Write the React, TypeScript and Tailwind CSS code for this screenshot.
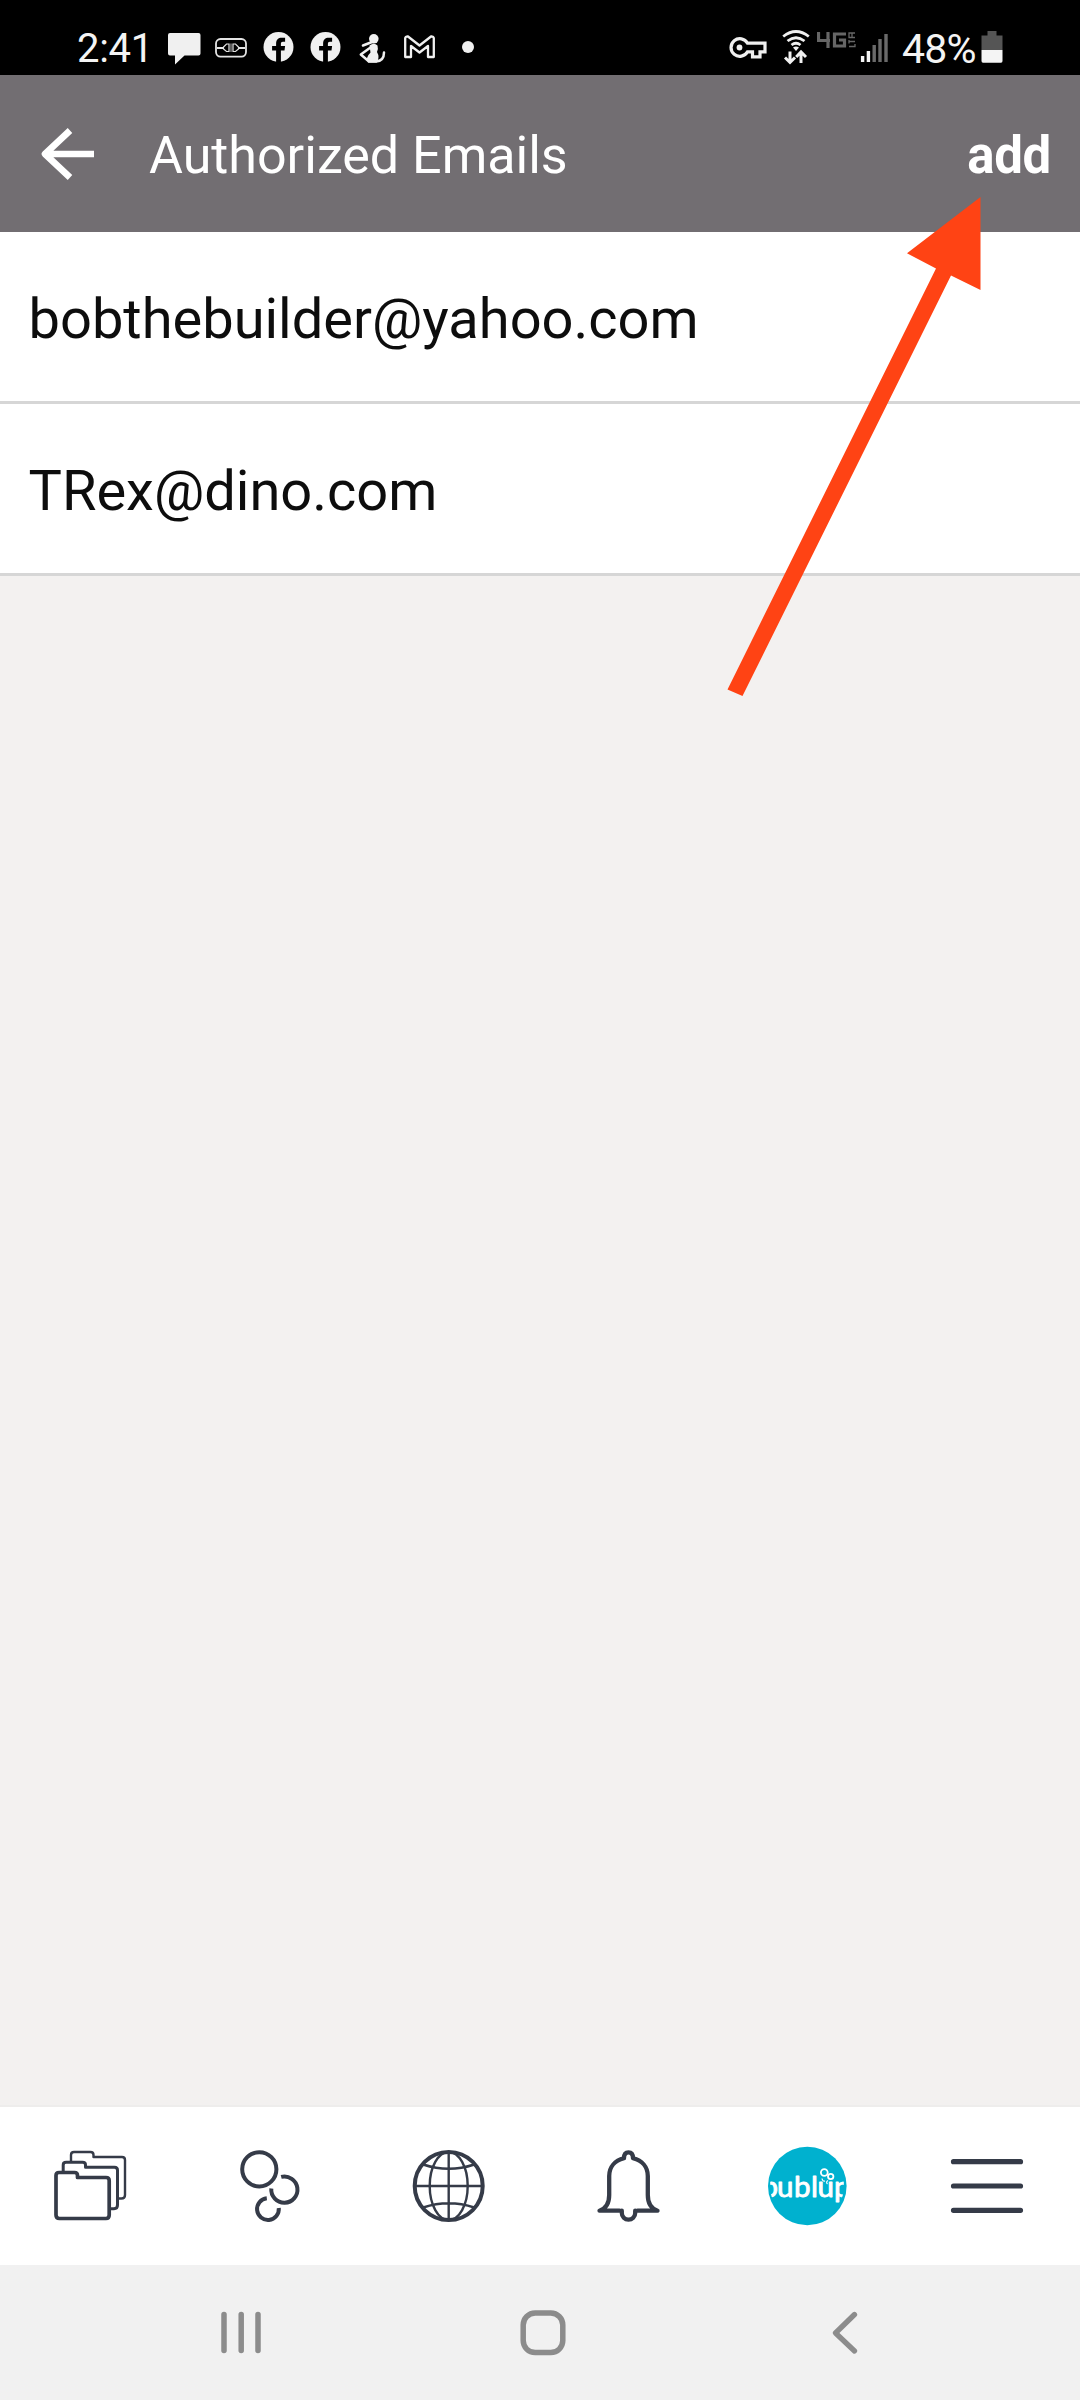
import React from 'react';

const emails = ['bobthebuilder@yahoo.com', 'TRex@dino.com'];

const FacebookDot = ({ className }: { className: string }) => (
  <svg className={className} viewBox="0 0 30 30">
    <circle cx="15" cy="15" r="15" fill="#f0f0f0" />
    <path d="M12.6 30V18.6H8.6V14H12.6V11.6C12.6 7.6 14.8 5.8 18.2 5.8H21.6V9.8H19.4C18 9.8 17.4 10.6 17.4 11.8V14H21.6L21 18.6H17.4V30Z" fill="#000" />
  </svg>
);

const StatusBar = () => (
  <div className="flex h-[75px] shrink-0 items-start bg-black text-[#f4f4f4]">
    <span className="ml-[77px] mt-[25px] w-[91px] whitespace-nowrap text-[40px] leading-[48px] tracking-[-0.3px]">2:41</span>
    <svg className="mt-[33px] h-[32px] w-[33px]" viewBox="0 0 33 32">
      <path d="M2 0H30.500Q32.500 0 32.500 2V20.500Q32.500 22.500 30.500 22.500H16.500L7 31.500V22.500H2Q0 22.500 0 20.500V2Q0 0 2 0Z" fill="#f0f0f0" />
    </svg>
    <svg className="ml-[14px] mt-[38px] h-[20px] w-[32px]" viewBox="0 0 32 20" fill="none" stroke="#e4e4e4" strokeWidth="1.800">
      <rect x="1" y="1" width="30" height="17.600" rx="4.500" />
      <path d="M2 10H8.500M23.500 10H30" strokeWidth="2" />
      <path d="M14 6H11.500L8.500 9V11L11.500 13.500H14ZM18 6H20.500L23.500 9V11L20.500 13.500H18Z" strokeWidth="1.200" />
      <path d="M16 5.500V14" strokeWidth="0.800" />
    </svg>
    <FacebookDot className="ml-[16px] mt-[32px] h-[30px] w-[31px]" />
    <FacebookDot className="ml-[16px] mt-[32px] h-[30px] w-[31px]" />
    <svg className="ml-[18px] mt-[33px] h-[31px] w-[27px]" viewBox="0 0 27 31">
      <circle cx="14.800" cy="5.800" r="4.800" fill="#f0f0f0" />
      <path d="M13 9L4 12.500" stroke="#f0f0f0" strokeWidth="2.600" strokeLinecap="round" />
      <path d="M10.500 12.500Q15 9 18.500 12.500Q19.500 16 18 19Q21 24 18 29.500H9Q6 25 11.500 19.500Z" fill="#f0f0f0" />
      <path d="M11.500 14.500L1.800 21.500L10 28.500H17Q25 28 25 19.500" fill="none" stroke="#f0f0f0" strokeWidth="2.500" strokeLinecap="round" strokeLinejoin="round" />
    </svg>
    <svg className="ml-[18px] mt-[35px] h-[24px] w-[31px]" viewBox="0 0 31 24" fill="none" stroke="#f0f0f0" strokeWidth="2.300" strokeLinejoin="round">
      <path d="M1.200 22V3Q1.500 1.200 4 1.500L15.500 10.500L27 1.500Q29.500 1.200 29.800 3V22H24V11L15.500 17.500L7 11V22Z" />
    </svg>
    <div className="ml-[27px] mt-[41px] h-3 w-3 rounded-full bg-[#f0f0f0]" />
    <svg className="ml-[255px] mt-[37px] h-[22px] w-[38px]" viewBox="0 0 38 22" fill="none" stroke="#f0f0f0" strokeWidth="3.200">
      <path d="M18.500 6.200A8.800 8.800 0 1 0 18.500 14.800H23.500V19.800H31V14.800H36V6.200Z" />
      <circle cx="10.500" cy="10.500" r="2.900" fill="#f0f0f0" stroke="none" />
    </svg>
    <svg className="ml-[15px] mt-[30px] h-[35px] w-[28px]" viewBox="0 0 28 35" fill="none" stroke="#f0f0f0" strokeWidth="2.800">
      <path d="M1.200 6.500Q14 -3.500 26.800 6.500M5.500 11Q14 4.500 22.500 11M9.500 15Q14 11.500 18.500 15" />
      <path d="M11 17.500Q14 15.500 17 17.500L14 21Z" fill="#f0f0f0" stroke="none" />
      <path d="M8 21.500V32M3 27.500L8 32.500L13 27.500M19 33V22M14.200 27L19 22L24 27" strokeWidth="3" />
    </svg>
    <svg className="ml-[7px] mt-[32px] h-[17px] w-[39px]" viewBox="0 0 39 17" fill="none" stroke="#666" strokeWidth="3.200">
      <path d="M1.500 0V8.500H13M11 0V16M29 2H17.500V14H27.500V8H22" />
      <path d="M38 1H32V5.500H38M35 1V5.500M32 8V11.500M32 9.500H38M32 14.500H38V12" strokeWidth="1.300" />
    </svg>
    <svg className="ml-[4px] mt-[33px] h-[30px] w-[28px]" viewBox="0 0 28 30" strokeWidth="3.400">
      <path d="M2.600 23V29M8.400 18V29" stroke="#f4f4f4" />
      <path d="M14.200 12V29M20 6V29M26 1V29" stroke="#6a6a6a" />
    </svg>
    <span className="ml-[14px] mt-[25px] w-[79px] whitespace-nowrap text-[41px] leading-[48px] tracking-[-0.8px]">48%</span>
    <svg className="mt-[31px] h-[32px] w-[22px]" viewBox="0 0 22 32">
      <path d="M6.500 0H15.500V4.500H21.500V19H0.500V4.500H6.500Z" fill="#555" />
      <path d="M0.500 19H21.500V30Q21.500 31.700 20 31.700H2Q0.500 31.700 0.500 30Z" fill="#f4f4f4" />
    </svg>
  </div>
);

const tab = 'h-20 w-20 shrink-0';

const TabBar = () => (
  <nav className="flex h-[158px] shrink-0 items-center justify-between bg-white pl-[49px] pr-[53px] text-[#353b48]">
    <svg className={tab} viewBox="0 0 80 80" fill="none" stroke="currentColor" strokeLinejoin="round">
      <path d="M22 16V9Q22 6 25 6H41.500Q44.500 6 44.500 9V11H73Q76 11 76 14V49Q76 52.500 72.500 52.500H69" strokeWidth="2.400" />
      <path d="M14.200 26V19Q14.200 16.300 17.200 16.300H33.500Q36.500 16.300 36.500 19V21.300H65.500Q68.500 21.300 68.500 24.300V59Q68.500 62.700 65 62.700H61" strokeWidth="3" />
      <path d="M7 69V29.500Q7 26.500 10 26.500H25.500Q28.500 26.500 28.500 29.500V31.500H57Q60.200 31.500 60.200 34.500V69Q60.200 72.500 57 72.500H10.500Q7 72.500 7 69Z" strokeWidth="3.700" />
    </svg>
    <svg className={tab} viewBox="0 0 80 80" fill="none" stroke="currentColor" strokeWidth="4">
      <circle cx="30.300" cy="23.300" r="17.100" />
      <path d="M52.200 30.900A13.100 13.100 0 1 1 42.300 42.500" />
      <path d="M49.800 62A10.900 10.900 0 1 1 37.800 52.200" />
    </svg>
    <svg className={tab} viewBox="0 0 80 80" fill="none" stroke="currentColor" strokeWidth="2.400">
      <circle cx="40.700" cy="40" r="34" strokeWidth="4" />
      <ellipse cx="40.700" cy="40" rx="19" ry="34" />
      <path d="M40.700 6V74M6.700 40H74.700M15.200 18.500Q40.700 27 66.200 18.500M15.200 61.500Q40.700 53 66.200 61.500" />
    </svg>
    <svg className={tab} viewBox="0 0 80 80" fill="none" stroke="currentColor" strokeWidth="4.300" strokeLinecap="round" strokeLinejoin="round">
      <path d="M36 12.200Q36 6.400 40.500 6.400Q45 6.400 45 12.200C54 14.500 59.800 21 59.800 30V49C59.800 57 63 62.500 69.500 64.700H49.500M31.500 64.700H11.500C18 62.500 21.200 57 21.200 49V30C21.200 21 27 14.500 36 12.200" />
      <path d="M33.800 64.700V67A6.700 6.700 0 0 0 47.200 67V64.700" />
    </svg>
    <svg className={tab} viewBox="0 0 80 80">
      <defs>
        <clipPath id="avatar"><circle cx="40" cy="40" r="37" /></clipPath>
      </defs>
      <circle cx="40.300" cy="40" r="39.300" fill="#00b1cf" />
      <g clipPath="url(#avatar)">
        <text x="-5.500 10 27 44 50.500 67" y="50.500" fill="#fff" stroke="#fff" strokeWidth="0.900" strokeLinejoin="round" fontSize="29.500" fontFamily="Lato, sans-serif" fontWeight="400">publup</text>
      </g>
      <g fill="none" stroke="#fff" strokeWidth="1.800">
        <circle cx="57.300" cy="26.500" r="3.400" />
        <circle cx="63.700" cy="30.500" r="2.700" />
        <path d="M55 32.500Q55.500 35.500 58 35M61 34.500Q58.500 36 60.500 38" strokeWidth="1.200" />
      </g>
    </svg>
    <svg className={tab} viewBox="0 0 80 80" stroke="currentColor" strokeWidth="5.200" strokeLinecap="round">
      <path d="M6.500 15.700H73.500M6.500 40H73.500M6.500 64.300H73.500" />
    </svg>
  </nav>
);

const SystemNav = () => (
  <div className="flex h-[135px] shrink-0 items-center justify-between bg-[#f1f1f1] pl-[217px] pr-[211px] text-[#8c8c8c]">
    <svg className="h-12 w-12" viewBox="0 0 48 48" stroke="currentColor" strokeWidth="5.500" strokeLinecap="round">
      <path d="M7 5.500V41.500M24.200 5.500V41.500M41 5.500V41.500" />
    </svg>
    <svg className="h-12 w-12" viewBox="0 0 48 48" fill="none" stroke="currentColor" strokeWidth="5.500">
      <rect x="4.200" y="4" width="39.600" height="39.600" rx="12" />
    </svg>
    <svg className="h-12 w-12" viewBox="0 0 48 48" fill="none" stroke="currentColor" strokeWidth="5.300" strokeLinecap="round" strokeLinejoin="round">
      <path d="M33.500 5.500L14.500 24L33.500 42" />
    </svg>
  </div>
);

export default function App() {
  return (
    <div className="relative flex h-[2400px] w-[1080px] flex-col overflow-hidden bg-[#f3f1f0] font-[Roboto,sans-serif]">
      <StatusBar />
      <header className="flex h-[157px] shrink-0 items-center bg-[#726e72] pl-[39px] pr-[29px] text-white">
        <svg className="h-[56px] w-[56px]" viewBox="0 0 56 56" fill="none" stroke="currentColor" strokeWidth="6.600">
          <path d="M31 4.500L6 28L31 51.500M6 28H55" strokeLinejoin="round" />
        </svg>
        <h1 className="ml-[54px] pt-[5px] text-[52px] leading-[60px]">Authorized Emails</h1>
        <button className="ml-auto pt-[5px] text-[51px] font-bold leading-[60px] tracking-[-0.3px]">add</button>
      </header>
      <ul className="shrink-0">
        {emails.map((email) => (
          <li key={email} className="flex h-[172px] items-center border-b-[3px] border-[#d6d6d6] bg-white pl-[28.5px] pt-1 text-[56px] leading-[66px] text-[#0d0d0d]">
            {email}
          </li>
        ))}
      </ul>
      <main className="flex-1 border-b-2 border-[#eeedec]" />
      <TabBar />
      <SystemNav />
      <svg className="pointer-events-none absolute left-[720px] top-[190px] h-[520px] w-[270px]" viewBox="720 190 270 520">
        <path d="M980.500 197V290L951 275.500L742.500 696L727.500 689.500L936 268.500L907 253.300Z" fill="#ff4314" />
      </svg>
    </div>
  );
}
